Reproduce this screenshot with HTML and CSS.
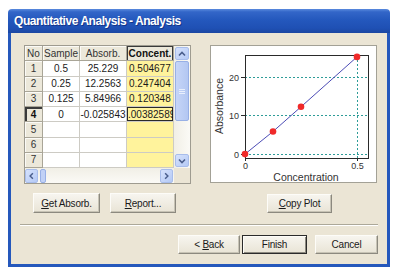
FILE: index.html
```html
<!DOCTYPE html>
<html>
<head>
<meta charset="utf-8">
<title>Quantitative Analysis - Analysis</title>
<link rel="stylesheet" href="styles.css">
</head>
<body>
<div class="window">
  <div class="titlebar"><span class="title">Quantitative Analysis - Analysis</span></div>
  <div class="body">
    <div class="top">
      <div class="leftcol">
        <div class="gridbox">
          <div class="gridmain">
            <div class="cells">
              <div class="hd">No</div><div class="hd">Sample</div><div class="hd">Absorb.</div><div class="hd selhd">Concent.</div>
              <div class="rh">1</div><div class="c">0.5</div><div class="c">25.229</div><div class="c y">0.504677</div>
              <div class="rh">2</div><div class="c">0.25</div><div class="c">12.2563</div><div class="c y">0.247404</div>
              <div class="rh">3</div><div class="c">0.125</div><div class="c">5.84966</div><div class="c y">0.120348</div>
              <div class="rh selrh">4</div><div class="c">0</div><div class="c">-0.025843</div><div class="c y focus">.00382589</div>
              <div class="rh">5</div><div class="c"></div><div class="c"></div><div class="c y"></div>
              <div class="rh">6</div><div class="c"></div><div class="c"></div><div class="c y"></div>
              <div class="rh">7</div><div class="c"></div><div class="c"></div><div class="c y"></div>
            </div>
            <div class="vscroll">
              <div class="sbtn vbtn"><svg width="12" height="12" viewBox="0 0 12 12"><polyline points="3,7.5 6,4.5 9,7.5" class="chev"/></svg></div>
              <div class="vthumb"><svg width="8" height="7" viewBox="0 0 8 7"><path d="M1 1.5h6M1 3.5h6M1 5.5h6" class="grip"/></svg></div>
              <div class="track"></div>
              <div class="sbtn vbtn"><svg width="12" height="12" viewBox="0 0 12 12"><polyline points="3,4.5 6,7.5 9,4.5" class="chev"/></svg></div>
            </div>
          </div>
          <div class="hrow">
            <div class="hscroll">
              <div class="sbtn hbtn"><svg width="12" height="12" viewBox="0 0 12 12"><polyline points="7.5,3 4.5,6 7.5,9" class="chev"/></svg></div>
              <div class="hthumb"></div>
              <div class="track"></div>
              <div class="sbtn hbtn"><svg width="12" height="12" viewBox="0 0 12 12"><polyline points="4.5,3 7.5,6 4.5,9" class="chev"/></svg></div>
            </div>
            <div class="corner"></div>
          </div>
        </div>
        <div class="btnrow">
          <button class="btn b-get"><u>G</u>et Absorb.</button>
          <button class="btn b-report"><u>R</u>eport...</button>
        </div>
      </div>
      <div class="rightcol">
        <div class="plot">
          <svg class="chart" width="165" height="136" viewBox="1 1 165 136">
            <g class="dash">
              <line x1="35" y1="32.5" x2="158" y2="32.5"/>
              <line x1="35" y1="70.5" x2="158" y2="70.5"/>
              <line x1="35" y1="109.5" x2="158" y2="109.5"/>
              <line x1="147.5" y1="11" x2="147.5" y2="113"/>
            </g>
            <rect x="35.5" y="10.5" width="123" height="103" class="axes"/>
            <path d="M31 32.5h4M31 70.5h4M31 109.5h4M35.5 113v3M147.5 113v3" class="ticks"/>
            <polyline points="35,109.1 63,86.5 91,61.8 147,11.9" class="fit"/>
            <g class="pts">
              <circle cx="35" cy="109.1" r="3.3"/>
              <circle cx="63" cy="86.5" r="3.3"/>
              <circle cx="91" cy="61.8" r="3.3"/>
              <circle cx="147" cy="11.9" r="3.3"/>
            </g>
            <g class="tick-lbl">
              <text x="29" y="35.5" text-anchor="end">20</text>
              <text x="29" y="73.5" text-anchor="end">10</text>
              <text x="29" y="112.5" text-anchor="end">0</text>
              <text x="35.5" y="124" text-anchor="middle">0</text>
              <text x="147.5" y="124" text-anchor="middle">0.5</text>
            </g>
            <text class="axis-lbl" x="96" y="135.5" text-anchor="middle">Concentration</text>
            <text class="axis-lbl" transform="translate(12.5 61) rotate(-90)" text-anchor="middle">Absorbance</text>
          </svg>
        </div>
        <button class="btn b-copy"><u>C</u>opy Plot</button>
      </div>
    </div>
    <div class="sep"></div>
    <div class="navrow">
      <button class="btn b-back">&lt; <u>B</u>ack</button>
      <button class="btn b-finish">Finish</button>
      <button class="btn b-cancel">Cancel</button>
    </div>
  </div>
</div>
</body>
</html>
```

FILE: styles.css
```css
* { box-sizing: border-box; }
html, body { margin: 0; padding: 0; background: #fff; }
body { font-family: "Liberation Sans", Arial, sans-serif; font-size: 10px; color: #1a1a1a; }

.window { margin: 9px 0 0 8px; width: 382px; display: flex; flex-direction: column; }

.titlebar {
  height: 24px;
  border-radius: 4px 4px 0 0;
  background: linear-gradient(to bottom, #5a8ade 0%, #3366c8 12%, #2458bd 45%, #1f50b4 80%, #1b47a2 100%);
  padding: 2px 0 0 6px;
}
.title {
  color: #fff; font-weight: bold; font-size: 12px; letter-spacing: -0.45px;
  line-height: 20px; text-shadow: 1px 1px 0 #14358a;
}

.body {
  height: 234px;
  background: #ebe5d5;
  border: 3px solid #2558bc;
  border-top: 0;
  padding-top: 12px;
  display: flex; flex-direction: column;
}

.top { display: flex; gap: 19px; margin-left: 13px; }
.leftcol, .rightcol { width: 167px; display: flex; flex-direction: column; }

.gridbox {
  height: 139px; border: 1px solid #9e9b90; background: #fff;
  display: flex; flex-direction: column;
}
.gridmain { display: flex; height: 122px; }
.cells {
  width: 149px;
  display: grid;
  grid-template-columns: 18px 37px 47px 47px;
  grid-template-rows: repeat(8, 15.25px);
}
.cells > div {
  border-right: 1px solid #cdcbc4; border-bottom: 1px solid #cdcbc4;
  display: flex; align-items: center; justify-content: center;
  white-space: nowrap; overflow: hidden;
}
.cells > .hd, .cells > .rh {
  background: #ece8da; border-color: #a9a597;
  box-shadow: inset 1px 1px 0 #fbfaf6;
  color: #333;
}
.cells > .selhd { font-weight: bold; color: #111; box-shadow: inset 1px 1px 0 #3a3a3a, inset -1px 0 0 #3a3a3a; }
.cells > .selrh { font-weight: bold; color: #111; box-shadow: inset 2px 2px 0 #3a3a3a; }
.cells > .y { background: #fff39c; justify-content: flex-start; padding-left: 2px; }
.cells > .focus { box-shadow: inset 0 0 0 1px #2a2a2a; padding-left: 1px; }

.vscroll {
  width: 16px; display: flex; flex-direction: column; align-items: center;
  background: linear-gradient(to right, #f1efe6, #fbfaf6);
  padding: 1px 0;
}
.sbtn {
  width: 14px; height: 14px;
  background: linear-gradient(to bottom right, #d6e2fc, #b4c9f5);
  border: 1px solid #a8bdeb; border-radius: 2px;
  display: flex; align-items: center; justify-content: center;
}
.vbtn { width: 14px; height: 13px; }
.chev { fill: none; stroke: #4a5e8c; stroke-width: 1.6; }
.vthumb {
  margin-top: 1px; width: 14px; height: 60px;
  background: linear-gradient(to right, #c6d5f7, #b3c7f2);
  border: 1px solid #98b0e6; border-radius: 2px;
  display: flex; align-items: center; justify-content: center;
}
.grip { stroke: #e9effc; stroke-width: 1; }
.track { flex: 1; }

.hrow { display: flex; height: 15px; }
.hscroll {
  width: 149px; display: flex; align-items: center; padding: 0 1px 0 0;
  background: linear-gradient(to bottom, #f1efe6, #fbfaf6);
}
.hbtn { width: 13px; height: 14px; }
.hthumb {
  margin-left: 2px; width: 6px; height: 14px;
  background: #c1d1f6; border: 1px solid #98b0e6; border-radius: 2px;
}
.corner { flex: 1; background: #ebe5d5; }

.btn {
  font-family: "Liberation Sans", Arial, sans-serif; font-size: 10px;
  letter-spacing: -0.2px; color: #1a1a1a;
  padding: 0; height: 20px;
  background: linear-gradient(to bottom, #f7f5ef, #e9e4d6);
  border: 1px solid; border-color: #fdfcf8 #8c897f #8c897f #fdfcf8;
  box-shadow: inset -1px -1px 0 #c7c3b5;
}
.btn u { text-decoration: underline; }

.btnrow { display: flex; gap: 10px; margin: 9px 0 0 9px; }
.b-get { width: 67px; }
.b-report { width: 66px; }

.plot { height: 138px; border: 1px solid #a3a196; background: #fff; }
.chart { display: block; }
.dash line { stroke: #2e9c98; stroke-width: 1; stroke-dasharray: 2 2; }
.axes { fill: none; stroke: #2a2a2a; stroke-width: 1; }
.ticks { stroke: #2a2a2a; stroke-width: 1; fill: none; }
.fit { fill: none; stroke: #4c4cb6; stroke-width: 1; }
.pts circle { fill: #f02a2a; }
.tick-lbl text { font-size: 9px; fill: #333; }
.axis-lbl { font-size: 10.5px; fill: #333; }

.b-copy { width: 65px; height: 19px; margin: 11px 0 0 57px; }

.sep {
  margin: 11px 9px 0 9px; height: 2px;
  border-top: 1px solid #aca899; border-bottom: 1px solid #fff;
}

.navrow { display: flex; justify-content: flex-end; margin: 9px 9px 0 0; }
.navrow .btn { height: 19px; }
.b-back { width: 62px; }
.b-finish { width: 65px; margin-left: 2px; border: 1px solid #2b2b2b; box-shadow: inset 1px 1px 0 #fdfcf8, inset -1px -1px 0 #8c897f; }
.b-cancel { width: 63px; margin-left: 8px; }
```
